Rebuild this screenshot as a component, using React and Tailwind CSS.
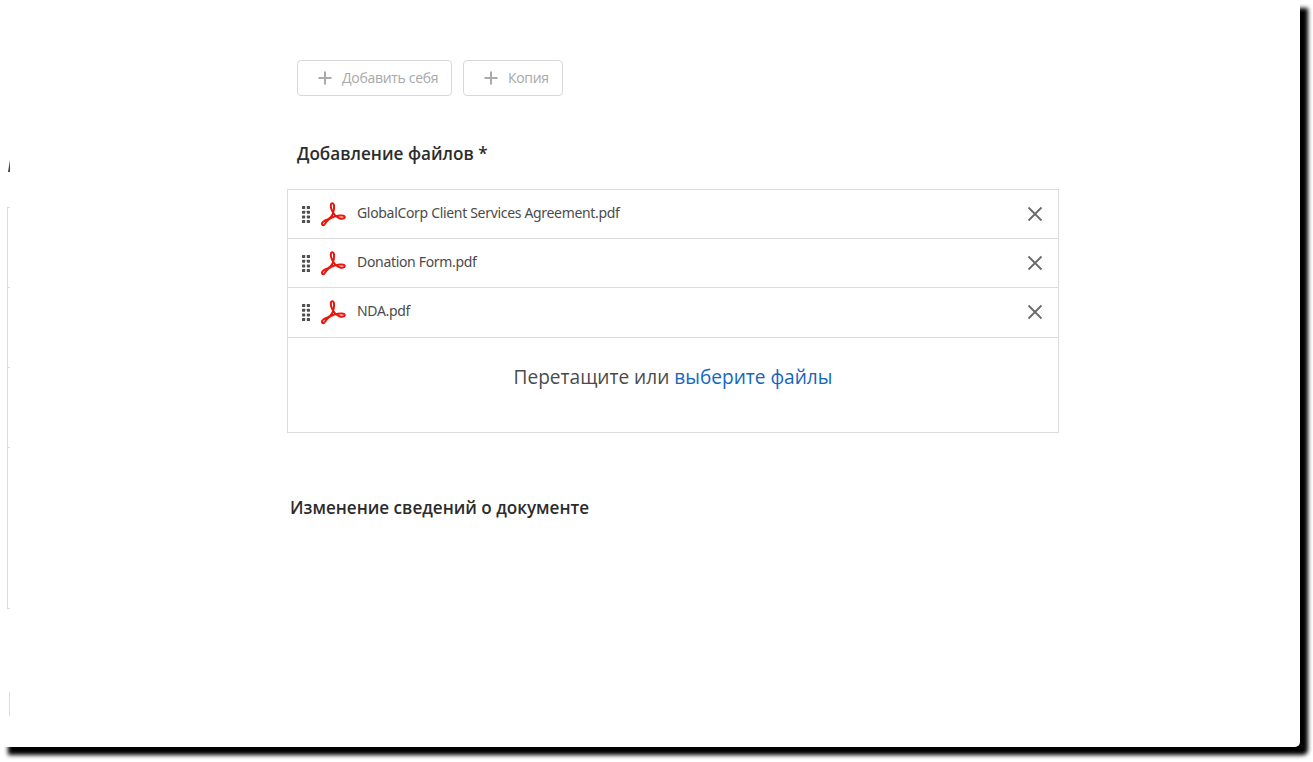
import React from "react";

const files = ["GlobalCorp Client Services Agreement.pdf", "Donation Form.pdf", "NDA.pdf"];

const PlusIcon = () => (
  <svg width="14" height="14" viewBox="0 0 14 14" className="shrink-0">
    <path d="M7 0.5V13.5M0.5 7H13.5" stroke="#aaaaaa" strokeWidth="2" fill="none" />
  </svg>
);

const GripIcon = () => (
  <svg width="8" height="17" viewBox="0 0 8 17" className="shrink-0" fill="#4f4f4f">
    {[0, 4.7, 9.4, 14].map((y) => (
      <React.Fragment key={y}>
        <rect x="0" y={y} width="3.2" height="3" rx="0.6" />
        <rect x="4.8" y={y} width="3.2" height="3" rx="0.6" />
      </React.Fragment>
    ))}
  </svg>
);

const PdfIcon = () => (
  <svg width="26" height="25" viewBox="0 0 26 25" className="shrink-0">
    <path
      d="M2.2 22.6C1 21 4 18.6 8 17.2C11 16 13.2 12 13.8 8C14.3 4.4 14.2 1.2 12.4 1.2C10.4 1.2 10.4 5 11.8 8.2C13.4 12 16 15 19.4 16.2C22.4 17.2 24.8 16.6 24.8 15C24.8 13 19.4 13 14.4 14.6C9.4 16.2 6.4 19.2 4.8 22C3.8 23.6 2.8 23.4 2.2 22.6Z"
      fill="none"
      stroke="#e8170c"
      strokeWidth="2"
      strokeLinejoin="round"
    />
  </svg>
);

const CloseIcon = () => (
  <svg width="16" height="16" viewBox="0 0 16 16" className="shrink-0">
    <path d="M1.5 1.5L14.5 14.5M14.5 1.5L1.5 14.5" stroke="#6a6a6a" strokeWidth="1.8" fill="none" />
  </svg>
);

const SideRail = () => (
  <div className="w-[287px] shrink-0 pl-[7px] pt-[160px] flex flex-col">
    <div className="h-[47px]">
      <div className="ml-px w-0 h-0 border-l-[2px] border-r-0 border-b-[12px] border-l-transparent border-b-[#444444]" />
    </div>
    <div className="w-[3px] border-l border-[#dcdcdc]">
      {[80, 80, 80, 161].map((h, i) => (
        <div key={i} className="border-t border-[#dcdcdc]" style={{ height: h }} />
      ))}
      <div className="border-t border-[#dcdcdc]" />
    </div>
    <div className="ml-[2px] mt-[83px] h-[24px] w-px bg-[#dcdcdc]" />
  </div>
);

const ActionButton = ({ label, className }) => (
  <button
    disabled
    className={`h-[36px] flex items-center gap-[10px] border border-[#d8d8d8] rounded-[4px] text-[14px] tracking-[-0.3px] text-[#a8a8a8] ${className}`}
  >
    <PlusIcon />
    <span className="mb-px">{label}</span>
  </button>
);

export default function App() {
  return (
    <div className="w-[1313px] h-[762px] bg-white overflow-hidden font-['Open_Sans',sans-serif]">
      <div className="w-[1300px] h-[747px] bg-white rounded-br-[5px] shadow-[8px_8px_4px_#000000] flex">
        <SideRail />
        <div className="w-[772px] pt-[60px]">
          <div className="flex gap-[11px] pl-[10px]">
            <ActionButton label="Добавить себя" className="w-[155px] pl-[20px]" />
            <ActionButton label="Копия" className="w-[100px] pl-[20px]" />
          </div>

          <h2 className="mt-[46px] pl-[10px] text-[17.15px] leading-[24px] font-semibold text-[#2c2c2c]">
            Добавление файлов *
          </h2>

          <div className="mt-[23px] border border-[#dcdcdc]">
            {files.map((name, i) => (
              <div
                key={name}
                className={`flex items-center border-b border-[#dcdcdc] pl-[14px] pr-[15px] ${i === 2 ? "h-[50px] pb-px" : "h-[49px]"}`}
              >
                <GripIcon />
                <span className="ml-[10px]">
                  <PdfIcon />
                </span>
                <span className="ml-[11px] mb-[3px] flex-1 font-['Noto_Sans',sans-serif] text-[14px] tracking-[-0.32px] text-[#4b4b4b]">
                  {name}
                </span>
                <CloseIcon />
              </div>
            ))}
            <div className="h-[94px] pt-[25px] text-center text-[19.1px] leading-[28px] text-[#4b4b4b]">
              Перетащите или <span className="text-[#1566c0]">выберите файлы</span>
            </div>
          </div>

          <h2 className="mt-[63px] pl-[3px] text-[17.1px] leading-[24px] font-semibold text-[#2c2c2c]">
            Изменение сведений о документе
          </h2>
        </div>
      </div>
    </div>
  );
}
